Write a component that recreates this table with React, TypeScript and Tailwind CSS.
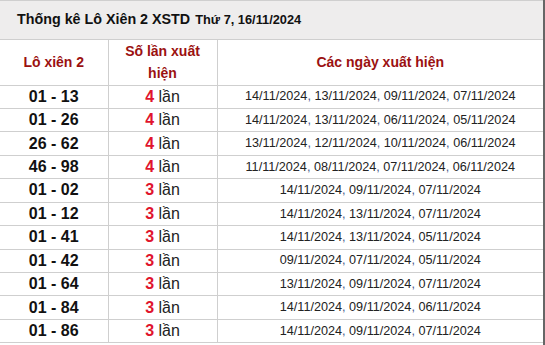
import React from 'react';

type Row = { pair: string; count: number; dates: string[] };

const rows: Row[] = [
  { pair: '01 - 13', count: 4, dates: ['14/11/2024', '13/11/2024', '09/11/2024', '07/11/2024'] },
  { pair: '01 - 26', count: 4, dates: ['14/11/2024', '13/11/2024', '06/11/2024', '05/11/2024'] },
  { pair: '26 - 62', count: 4, dates: ['13/11/2024', '12/11/2024', '10/11/2024', '06/11/2024'] },
  { pair: '46 - 98', count: 4, dates: ['11/11/2024', '08/11/2024', '07/11/2024', '06/11/2024'] },
  { pair: '01 - 02', count: 3, dates: ['14/11/2024', '09/11/2024', '07/11/2024'] },
  { pair: '01 - 12', count: 3, dates: ['14/11/2024', '13/11/2024', '07/11/2024'] },
  { pair: '01 - 41', count: 3, dates: ['14/11/2024', '13/11/2024', '05/11/2024'] },
  { pair: '01 - 42', count: 3, dates: ['09/11/2024', '07/11/2024', '05/11/2024'] },
  { pair: '01 - 64', count: 3, dates: ['13/11/2024', '09/11/2024', '07/11/2024'] },
  { pair: '01 - 84', count: 3, dates: ['14/11/2024', '09/11/2024', '06/11/2024'] },
  { pair: '01 - 86', count: 3, dates: ['14/11/2024', '09/11/2024', '07/11/2024'] },
];

export default function App() {
  return (
    <div className="w-[545px] h-[345px] overflow-hidden bg-white border-r-2 border-[#666] font-['Liberation_Sans',Arial,sans-serif]">
      {/* Title bar */}
      <div className="h-[40px] border-y border-[#cfcfcf] bg-[#eeeded] flex items-center pl-[17px] text-[#111] font-bold">
        <span className="text-[14.3px]">Thống kê Lô Xiên 2 XSTD</span>
        <span className="text-[12.8px] ml-[5px]">Thứ 7, 16/11/2024</span>
      </div>

      <table className="w-[543px] border-collapse table-fixed">
        <colgroup>
          <col className="w-[108px]" />
          <col className="w-[109px]" />
          <col />
        </colgroup>
        <thead>
          <tr className="border-b border-[#cfcfcf] text-[#9b1111] text-[14px] font-bold leading-[22px]">
            <th className="h-[45px] p-0 border-r border-[#cfcfcf] font-bold">Lô xiên 2</th>
            <th className="h-[45px] p-0 border-r border-[#cfcfcf] font-bold px-[14px]">Số lần xuất hiện</th>
            <th className="h-[45px] p-0 font-bold">Các ngày xuất hiện</th>
          </tr>
        </thead>
        <tbody>
          {rows.map((r) => (
            <tr key={r.pair} className="border-b border-[#cfcfcf]">
              <td className="h-[23.45px] p-0 text-center border-r border-[#cfcfcf] text-[16px] font-bold text-[#111] leading-none">
                {r.pair}
              </td>
              <td className="h-[23.45px] p-0 text-center border-r border-[#cfcfcf] text-[16px] text-[#222] leading-none">
                <span className="font-bold text-[#e0142d]">{r.count}</span> lần
              </td>
              <td className="h-[23.45px] p-0 text-center text-[12.65px] text-[#222] leading-none">
                {r.dates.map((d, i) => (
                  <React.Fragment key={d + i}>
                    {i > 0 && <span className="text-[#4b5a8c]">, </span>}
                    {d}
                  </React.Fragment>
                ))}
              </td>
            </tr>
          ))}
        </tbody>
      </table>
    </div>
  );
}
